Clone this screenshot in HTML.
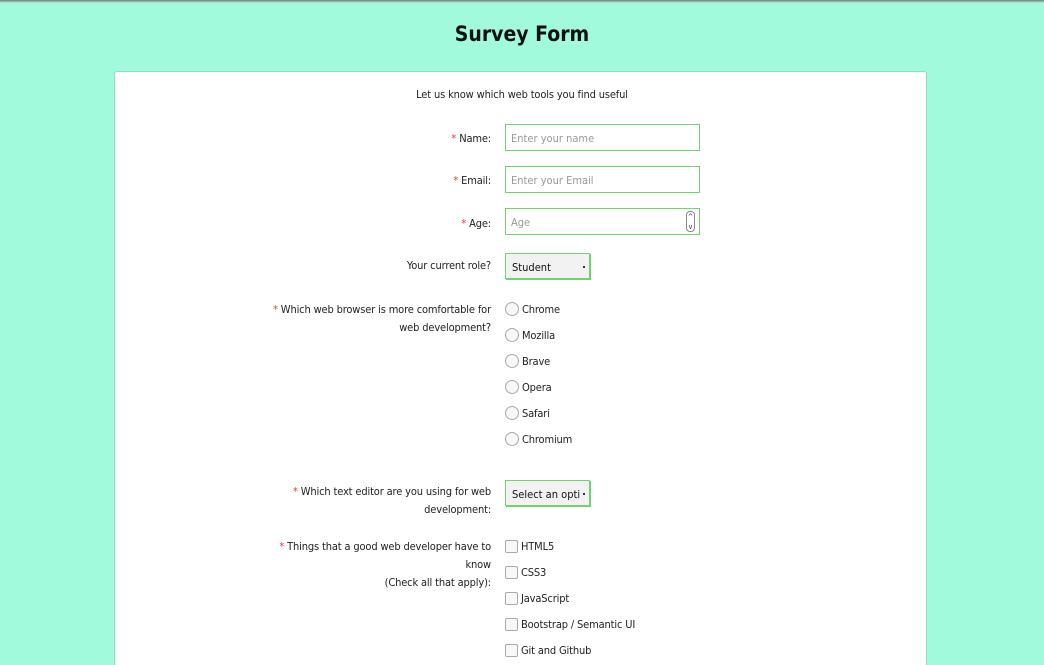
<!DOCTYPE html>
<html><head><style>
*{box-sizing:border-box;margin:0;padding:0}
html,body{width:1044px;height:665px;overflow:hidden}
body{background:#a2fadd;font-family:"DejaVu Sans Condensed","Liberation Sans",sans-serif;color:#222;position:relative}
.top{position:absolute;left:0;top:0;width:1044px;height:3px;background:linear-gradient(#777,#a2fadd)}
h1{position:absolute;left:0;width:1044px;top:22px;text-align:center;font-size:21px;font-weight:bold;color:#111}
.card{position:absolute;left:114px;top:71px;width:813px;height:610px;background:#fff;border:1px solid #8fdcbf;border-radius:3px}
.a{position:absolute;font-size:11px;letter-spacing:-0.15px;white-space:nowrap}
.r{text-align:right;right:553px;white-space:normal;line-height:18px}
.s{color:#e33}
.in{position:absolute;left:505px;width:195px;height:27px;border:1px solid #6ed46e;font-size:11px;color:#999;padding:7px 5px;background:#fff}
.sel{position:absolute;left:505px;width:85px;height:26px;border:1px solid #6ed46e;font-size:11px;color:#111;padding:7px 6px;background:#f2f2f2;box-shadow:1px 1px 0 #6ed46e;white-space:nowrap;overflow:hidden}
.sel:after{content:"";position:absolute;right:4px;top:12px;width:2px;height:2px;background:#333}
.rad{position:absolute;left:505px;width:14px;height:14px;border:1px solid #aaa;border-radius:50%;background:#f8f8f8}
.chk{position:absolute;left:505px;width:13px;height:13px;border:1px solid #aaa;border-radius:2px;background:#f8f8f8}
</style></head><body>
<div class="top"></div>
<h1>Survey Form</h1>
<div class="card"></div>
<div class="a" style="left:0;width:1044px;text-align:center;top:88px">Let us know which web tools you find useful</div>

<div class="a r" style="top:130px;width:200px"><span class="s">*</span> Name:</div>
<div class="in" style="top:124px">Enter your name</div>
<div class="a r" style="top:172px;width:200px"><span class="s">*</span> Email:</div>
<div class="in" style="top:166px">Enter your Email</div>
<div class="a r" style="top:215px;width:200px"><span class="s">*</span> Age:</div>
<div class="in" style="top:208px">Age<span style="position:absolute;right:4px;top:2px;width:9px;height:21px;border:1px solid #888;border-radius:4px;font-size:7px;color:#333;line-height:10px;text-align:center">^<br>v</span></div>
<div class="a r" style="top:257px;width:200px">Your current role?</div>
<div class="sel" style="top:253px">Student</div>

<div class="a r" style="top:301px;width:220px"><span class="s">*</span> Which web browser is more comfortable for web development?</div>
<div class="rad" style="top:302px"></div><div class="a" style="left:522px;top:303px">Chrome</div>
<div class="rad" style="top:328px"></div><div class="a" style="left:522px;top:329px">Mozilla</div>
<div class="rad" style="top:354px"></div><div class="a" style="left:522px;top:355px">Brave</div>
<div class="rad" style="top:380px"></div><div class="a" style="left:522px;top:381px">Opera</div>
<div class="rad" style="top:406px"></div><div class="a" style="left:522px;top:407px">Safari</div>
<div class="rad" style="top:432px"></div><div class="a" style="left:522px;top:433px">Chromium</div>

<div class="a r" style="top:483px;width:200px"><span class="s">*</span> Which text editor are you using for web development:</div>
<div class="sel" style="top:480px">Select an opti</div>

<div class="a r" style="top:538px;width:220px"><span class="s">*</span> Things that a good web developer have to know<br>(Check all that apply):</div>
<div class="chk" style="top:540px"></div><div class="a" style="left:521px;top:540px">HTML5</div>
<div class="chk" style="top:566px"></div><div class="a" style="left:521px;top:566px">CSS3</div>
<div class="chk" style="top:592px"></div><div class="a" style="left:521px;top:592px">JavaScript</div>
<div class="chk" style="top:618px"></div><div class="a" style="left:521px;top:618px">Bootstrap / Semantic UI</div>
<div class="chk" style="top:644px"></div><div class="a" style="left:521px;top:644px">Git and Github</div>
</body></html>
